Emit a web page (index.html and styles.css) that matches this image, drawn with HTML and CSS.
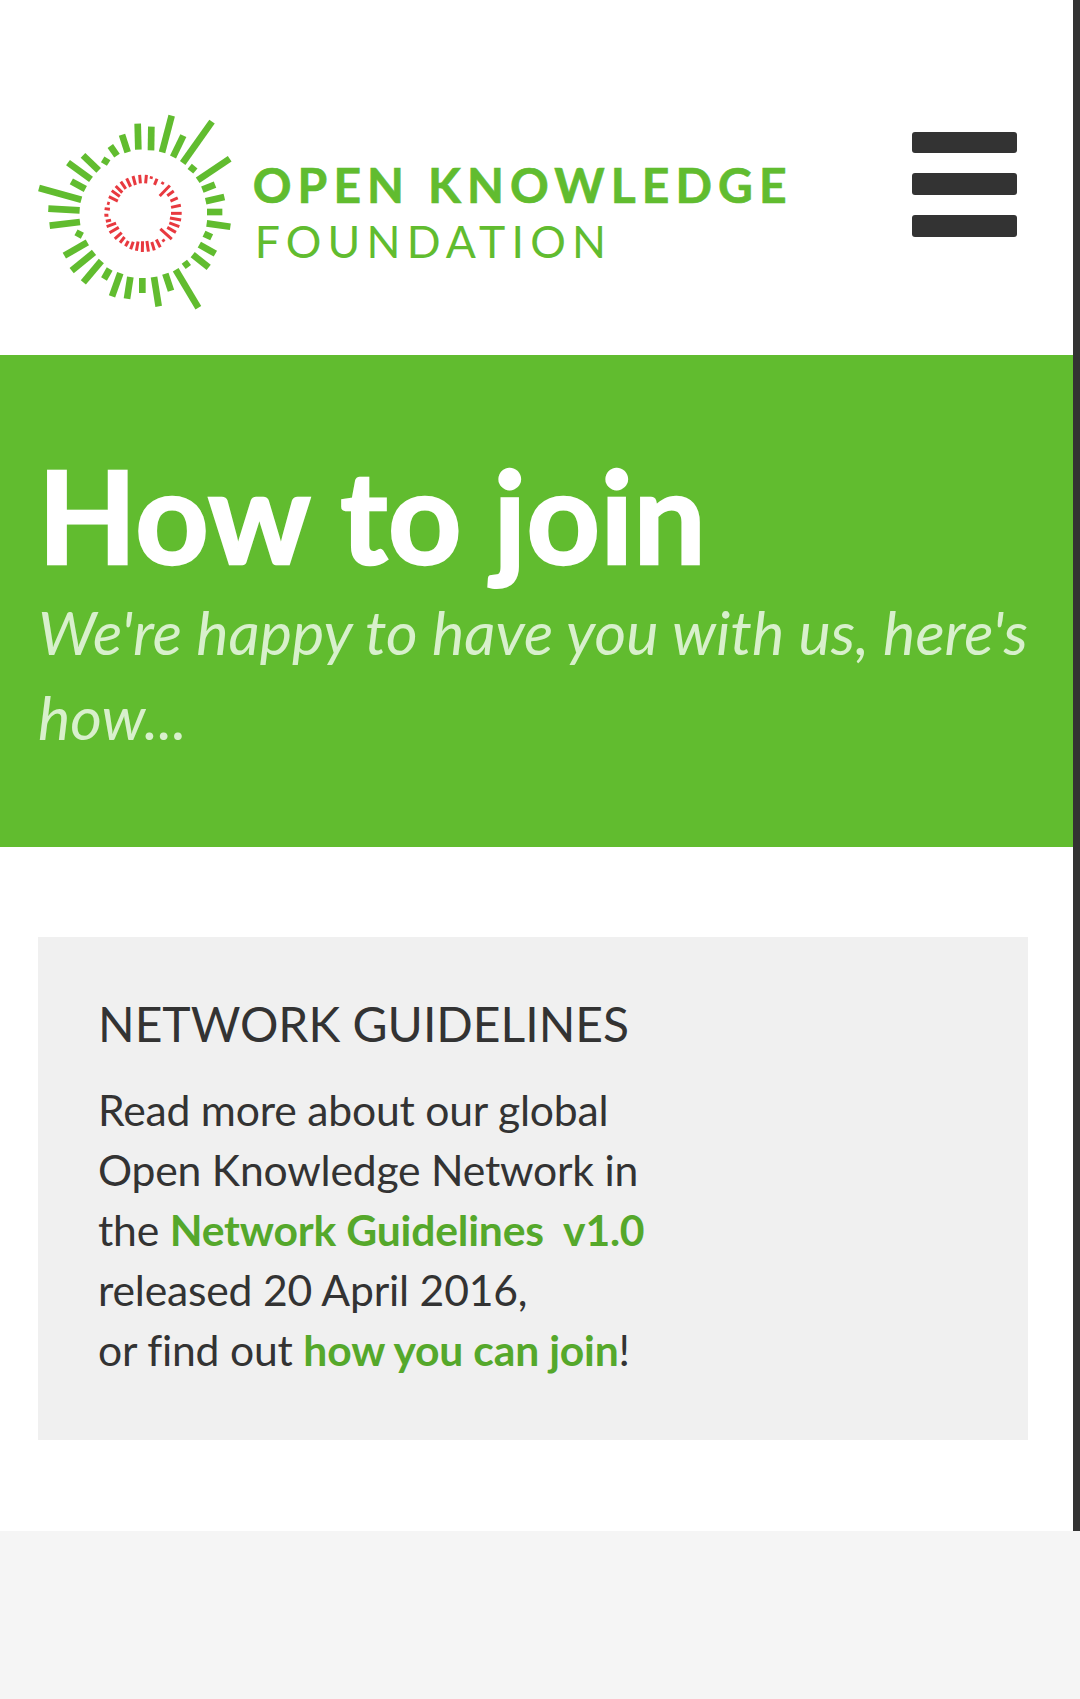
FILE: index.html
```html
<!DOCTYPE html>
<html lang="en">
<head>
<meta charset="utf-8">
<title>How to join</title>
<link rel="stylesheet" href="styles.css">
</head>
<body>
<div class="page">
  <header class="site-header">
    <a class="logo" href="#">
      <svg class="logo-mark" viewBox="50 40 590 596" aria-hidden="true">
        <g class="rays">
          <line x1="352" y1="72" x2="354" y2="150"/><line x1="393" y1="81" x2="392" y2="152"/><line x1="454" y1="48" x2="425" y2="158"/><line x1="489" y1="108" x2="458" y2="172"/><line x1="575" y1="66" x2="487" y2="190"/><line x1="508" y1="200" x2="525" y2="214"/><line x1="628" y1="177" x2="532" y2="242"/><line x1="584" y1="255" x2="546" y2="270"/><line x1="612" y1="292" x2="556" y2="305"/><line x1="606" y1="337" x2="560" y2="337"/><line x1="630" y1="381" x2="559" y2="371"/><line x1="574" y1="413" x2="551" y2="402"/><line x1="585" y1="462" x2="537" y2="435"/><line x1="565" y1="503" x2="517" y2="465"/><line x1="506" y1="488" x2="490" y2="500"/><line x1="534" y1="624" x2="466" y2="510"/><line x1="452" y1="573" x2="435" y2="522"/><line x1="415" y1="620" x2="401" y2="532"/><line x1="366" y1="580" x2="366" y2="535"/><line x1="320" y1="597" x2="330" y2="532"/><line x1="275" y1="590" x2="300" y2="520"/><line x1="251" y1="538" x2="268" y2="508"/><line x1="189" y1="548" x2="243" y2="484"/><line x1="154" y1="513" x2="221" y2="458"/><line x1="132" y1="468" x2="201" y2="428"/><line x1="167" y1="398" x2="186" y2="408"/><line x1="88" y1="378" x2="179" y2="367"/><line x1="84" y1="327" x2="178" y2="332"/><line x1="56" y1="265" x2="183" y2="300"/><line x1="153" y1="245" x2="195" y2="268"/><line x1="143" y1="189" x2="212" y2="239"/><line x1="188" y1="167" x2="235" y2="212"/><line x1="247" y1="179" x2="265" y2="190"/><line x1="270" y1="139" x2="290" y2="168"/><line x1="305" y1="105" x2="322" y2="158"/>
        </g>
        <g class="ring">
          <line x1="368" y1="225" x2="368" y2="251" transform="rotate(5 368 341)"/><line x1="368" y1="227" x2="368" y2="235" transform="rotate(13 368 341)"/><line x1="368" y1="229" x2="368" y2="249" transform="rotate(22 368 341)"/><line x1="368" y1="229" x2="368" y2="237" transform="rotate(33 368 341)"/><line x1="368" y1="225" x2="368" y2="269" transform="rotate(44 368 341)"/><line x1="368" y1="227" x2="368" y2="251" transform="rotate(54 368 341)"/><line x1="368" y1="227" x2="368" y2="251" transform="rotate(66 368 341)"/><line x1="368" y1="225" x2="368" y2="255" transform="rotate(78 368 341)"/><line x1="368" y1="225" x2="368" y2="257" transform="rotate(90 368 341)"/><line x1="368" y1="225" x2="368" y2="259" transform="rotate(100 368 341)"/><line x1="368" y1="225" x2="368" y2="257" transform="rotate(110 368 341)"/><line x1="368" y1="227" x2="368" y2="257" transform="rotate(120 368 341)"/><line x1="368" y1="225" x2="368" y2="271" transform="rotate(132 368 341)"/><line x1="368" y1="235" x2="368" y2="243" transform="rotate(143 368 341)"/><line x1="368" y1="227" x2="368" y2="253" transform="rotate(153 368 341)"/><line x1="368" y1="225" x2="368" y2="251" transform="rotate(163 368 341)"/><line x1="368" y1="225" x2="368" y2="257" transform="rotate(172 368 341)"/><line x1="368" y1="225" x2="368" y2="257" transform="rotate(181 368 341)"/><line x1="368" y1="227" x2="368" y2="255" transform="rotate(190 368 341)"/><line x1="368" y1="227" x2="368" y2="251" transform="rotate(199 368 341)"/><line x1="368" y1="229" x2="368" y2="247" transform="rotate(208 368 341)"/><line x1="368" y1="229" x2="368" y2="251" transform="rotate(218 368 341)"/><line x1="368" y1="227" x2="368" y2="255" transform="rotate(228 368 341)"/><line x1="368" y1="225" x2="368" y2="257" transform="rotate(240 368 341)"/><line x1="368" y1="225" x2="368" y2="255" transform="rotate(250 368 341)"/><line x1="368" y1="227" x2="368" y2="243" transform="rotate(258 368 341)"/><line x1="368" y1="225" x2="368" y2="237" transform="rotate(267 368 341)"/><line x1="368" y1="225" x2="368" y2="241" transform="rotate(277 368 341)"/><line x1="368" y1="229" x2="368" y2="237" transform="rotate(286 368 341)"/><line x1="368" y1="227" x2="368" y2="257" transform="rotate(296 368 341)"/><line x1="368" y1="225" x2="368" y2="255" transform="rotate(306 368 341)"/><line x1="368" y1="225" x2="368" y2="253" transform="rotate(315 368 341)"/><line x1="368" y1="225" x2="368" y2="251" transform="rotate(325 368 341)"/><line x1="368" y1="225" x2="368" y2="253" transform="rotate(335 368 341)"/><line x1="368" y1="225" x2="368" y2="253" transform="rotate(345 368 341)"/><line x1="368" y1="225" x2="368" y2="251" transform="rotate(355 368 341)"/>
        </g>
      </svg>
      <span class="logo-text">
        <span class="logo-top">OPEN KNOWLEDGE</span>
        <span class="logo-bottom">FOUNDATION</span>
      </span>
    </a>
    <button class="menu-toggle" aria-label="Menu">
      <span class="menu-bar"></span>
      <span class="menu-bar"></span>
      <span class="menu-bar"></span>
    </button>
  </header>
  <section class="hero">
    <h1 class="hero-title">How to join</h1>
    <p class="hero-sub">We're happy to have you with us, here's how...</p>
  </section>
  <main class="content">
    <aside class="card">
      <h2 class="card-title">NETWORK GUIDELINES</h2>
      <p class="card-text">Read more about our global<br>Open Knowledge Network in<br>the <a href="#">Network Guidelines&nbsp; v1.0</a><br>released 20 April 2016,<br>or find out <a href="#">how you can join</a>!</p>
    </aside>
  </main>
</div>
<footer class="site-footer"></footer>
</body>
</html>
```
FILE: styles.css
```css
* { box-sizing: border-box; }
html, body { margin: 0; padding: 0; background: #fff; }
body { font-family: Lato, "Liberation Sans", sans-serif; color: #333; height: 1699px; overflow: hidden; font-variant-ligatures: none; }
.page { border-right: 7px solid #333; background: #fff; }
.site-header { height: 355px; display: flex; justify-content: space-between; align-items: flex-start; padding: 0 56px 0 37px; }
.logo { display: flex; align-items: center; gap: 19px; margin-top: 113px; text-decoration: none; color: #61bc2f; }
.logo-mark { width: 196.7px; height: 198.7px; display: block; flex: none; }
.rays line { stroke: #61bc2f; stroke-width: 20; }
.ring line { stroke: #e8393f; stroke-width: 9; }
.logo-text { display: flex; flex-direction: column; margin-top: 1px; }
.logo-top { font-size: 48px; line-height: 56px; font-weight: 700; letter-spacing: 6.1px; -webkit-text-stroke: 0.7px #61bc2f; white-space: nowrap; }
.logo-bottom { font-size: 44.5px; line-height: 55px; font-weight: 400; letter-spacing: 6.2px; padding-left: 2px; white-space: nowrap; }
.menu-toggle { margin: 131.5px 0 0; padding: 0; border: 0; background: none; display: flex; flex-direction: column; gap: 20.7px; }
.menu-bar { display: block; width: 105px; height: 21.3px; background: #333; border-radius: 3px; }
.hero { height: 492px; background: #61bc2f; padding: 102px 38px 0; color: #fff; }
.hero-title { margin: 0; font-size: 128px; line-height: 116px; font-weight: 700; letter-spacing: 0.5px; -webkit-text-stroke: 2.5px #fff; }
.hero-sub { margin: 16px 0 0; font-size: 61px; line-height: 85px; font-style: italic; font-weight: 400; color: #d8f0cc; }
.content { height: 684px; padding: 90px 38px 0; }
.card { width: 990px; height: 503px; background: #f0f0f0; padding: 56px 60px 0; }
.card-title { margin: 0; font-size: 48px; line-height: 62px; font-weight: 400; color: #333; }
.card-text { margin: 25px 0 0; font-size: 42.67px; line-height: 60px; letter-spacing: -0.2px; color: #333; }
.card-text a { color: #55a82b; font-weight: 700; text-decoration: none; }
.site-footer { height: 168px; background: #f5f5f5; }
```
